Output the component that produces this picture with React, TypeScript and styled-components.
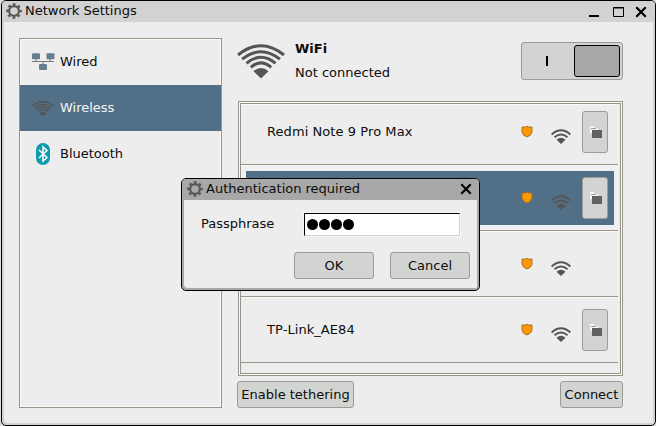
import React from "react";
import styled, { createGlobalStyle } from "styled-components";

const Global = createGlobalStyle`
  * { box-sizing: border-box; }
  body { margin: 0; background: #dcdcdc; font: 13px/16px "DejaVu Sans", sans-serif; color: #0c0c0c; }
  button { font: inherit; color: inherit; padding: 0; }
  svg { display: block; flex: none; }
`;

const Window = styled.div`
  position: relative;
  display: flex;
  flex-direction: column;
  width: 655px;
  height: 426px;
  margin-left: 1px;
  background: #ededed;
  border: 1px solid #000;
  border-radius: 5px;
  box-shadow: inset 2px -2px 0 #d2d2d2, inset -2px 0 0 #d2d2d2;
`;

const TitleBar = styled.header<{ $active?: boolean }>`
  display: flex;
  align-items: center;
  height: 21px;
  flex: none;
  padding: ${(p) => (p.$active ? "0 7px 2px 5px" : "0 8px 2px 4px")};
  background: ${(p) => (p.$active ? "#a8a8a8" : "#d2d2d2")};
  border-radius: 4px 4px 0 0;
`;

const Title = styled.h1`
  flex: 1;
  margin: 0 0 0 3px;
  font-size: 13px;
  font-weight: 400;
  line-height: 16px;
  white-space: nowrap;
`;

const WindowButtons = styled.div`
  display: flex;
  gap: 11px;
  padding-top: 2px;
`;

const Content = styled.main`
  display: flex;
  gap: 15px;
  padding: 16px 31px 0 17px;
`;

const Sidebar = styled.nav`
  width: 203px;
  height: 370px;
  border: 1px solid #97948a;
  box-shadow: inset 0 0 0 1px #fbfaf7;
`;

const NavItem = styled.a<{ $selected?: boolean }>`
  display: flex;
  align-items: center;
  gap: 5px;
  height: 46px;
  padding-left: 11px;
  color: ${(p) => (p.$selected ? "#f4f7fa" : "#0c0c0c")};
  background: ${(p) => (p.$selected ? "#526f88" : "transparent")};
`;

const NavIcon = styled.span`
  display: flex;
  justify-content: center;
  width: 24px;
`;

const Main = styled.section`
  width: 386px;
  display: flex;
  flex-direction: column;
`;

const Status = styled.div`
  display: flex;
  height: 63px;
`;

const StatusIcon = styled.div`
  padding-top: 4px;
`;

const StatusText = styled.div`
  flex: 1;
  padding: 3px 0 0 10px;
  display: flex;
  flex-direction: column;
  gap: 8px;
`;

const Toggle = styled.button`
  display: flex;
  align-items: center;
  width: 102px;
  height: 38px;
  margin-top: 4px;
  padding: 2px;
  border: 1px solid #999c98;
  border-radius: 3px;
  background: #d2d4d1;
`;

const ToggleMark = styled.span`
  width: 2px;
  height: 10px;
  margin: 0 26px 0 22px;
  background: #000;
`;

const Knob = styled.span`
  width: 46px;
  height: 32px;
  border: 1px solid #000;
  border-radius: 3px;
  background: #a8a8a8;
`;

const ListFrame = styled.div`
  height: 275px;
  margin-left: 1px;
  border: 1px solid #97948a;
  padding: 1px;
  background: #fbfaf7;
`;

const NetworkList = styled.div`
  height: 100%;
  border: 1px solid #97948a;
  background: #ededed;
  overflow: hidden;
`;

const Network = styled.div<{ $selected?: boolean }>`
  display: grid;
  grid-template-columns: 1fr 30px 31px 26px;
  align-items: center;
  height: 66px;
  margin-right: 2px;
  padding: 3px 10px 2px 26px;
  border-bottom: 1px solid #97948a;
  box-shadow: inset 0 1px 0 #fbfaf7;
  background: ${(p) =>
    p.$selected
      ? "linear-gradient(#526f88, #526f88) 5px 6px / 368px 54px no-repeat, #edf1f4"
      : "transparent"};

  &:first-child {
    height: 61px;
    padding-top: 1px;
    padding-bottom: 5px;
  }
`;

const NetworkName = styled.span`
  letter-spacing: 0.07px;
`;

const Security = styled.span`
  padding-bottom: 1px;
`;

const Signal = styled.span`
  padding-top: 8px;
`;

const Button = styled.button<{ $w?: number; $h?: number }>`
  display: flex;
  align-items: center;
  justify-content: center;
  width: ${(p) => p.$w ?? 26}px;
  height: ${(p) => p.$h ?? 27}px;
  border: 1px solid #999c98;
  border-radius: 3px;
  background: #d2d4d1;
`;

const Actions = styled.footer`
  display: flex;
  justify-content: space-between;
  padding-top: 5px;
`;

const Dialog = styled.div`
  position: absolute;
  left: 179px;
  top: 177px;
  width: 299px;
  height: 113px;
  display: flex;
  flex-direction: column;
  background: #ededed;
  border: 1px solid #000;
  border-radius: 5px;
  box-shadow: inset 2px -2px 0 #a8a8a8, inset -2px 0 0 #a8a8a8;
`;

const Field = styled.label`
  display: flex;
  align-items: center;
  padding: 13px 19px 0 19px;
`;

const FieldLabel = styled.span`
  width: 103px;
  padding-bottom: 2px;
`;

const Password = styled.span`
  display: flex;
  align-items: center;
  gap: 1px;
  width: 156px;
  height: 23px;
  padding-left: 2px;
  background: #fff;
  border: 1px solid #d0d0ce;
  border-top-color: #000;
  border-left-color: #000;
  box-shadow: 0 0 0 1px #f7f7f5;
`;

const Dot = styled.i`
  width: 11px;
  height: 11px;
  border-radius: 50%;
  background: #000;
`;

const DialogActions = styled.div`
  display: flex;
  justify-content: flex-end;
  gap: 16px;
  padding: 16px 9px 0 0;
`;

const Gear = () => (
  <svg width="16" height="16" viewBox="0 0 16 16" fill="none" stroke="#555">
    <circle cx="8" cy="8" r="4.9" strokeWidth="2.2" />
    <circle cx="8" cy="8" r="6.8" strokeWidth="2" strokeDasharray="2.67 2.67" strokeDashoffset="1.33" />
  </svg>
);

const Close = () => (
  <svg width="12" height="12" viewBox="0 0 12 12" stroke="#000" strokeWidth="2.2">
    <path d="M1.3 1.3 10.7 10.7M10.7 1.3 1.3 10.7" />
  </svg>
);

const Minimize = () => (
  <svg width="12" height="12">
    <path d="M0 9h10v2H0z" />
  </svg>
);

const Maximize = () => (
  <svg width="12" height="12" fill="none" stroke="#000">
    <path d="M1.5 1.5h10v9h-10zM1 2h11" />
  </svg>
);

const Wired = () => (
  <svg width="24" height="18" viewBox="0 0 24 18">
    <path d="M5 6v3M19 6v3M12 9v3M1 8.5h22" stroke="#777" fill="none" />
    <g fill="#647f8c">
      <rect x="1" y="0.3" width="8" height="6" rx="1" />
      <rect x="15.5" y="0.3" width="8" height="6" rx="1" />
      <rect x="8" y="11" width="8" height="6" rx="1" />
    </g>
  </svg>
);

const WifiLarge = ({ width = 48 }: { width?: number }) => (
  <svg width={width} height={(width * 37) / 48} viewBox="0 0 48 37" fill="none" stroke="#555" strokeWidth="3">
    <path d="M1 13Q24-5.5 47 13M5.1 17.200Q24 2.200 42.900 17.200M9.500 21.300Q24 9.300 38.500 21.300M13.800 25.400Q24 16.400 34.200 25.400" />
    <path d="M16.500 29.200Q24 22.600 31.500 29.200L24 36.500Z" fill="#555" stroke="none" />
  </svg>
);

const WifiSmall = () => (
  <svg width="20" height="15" viewBox="0 0 20 15" fill="none" stroke="#555" strokeWidth="1.9">
    <path d="M.6 5.5Q10-2.8 19.4 5.5M3.5 8.3Q10 2.8 16.5 8.3" />
    <path d="M5.500 10.800Q10 6.600 14.500 10.800L10 15Z" fill="#555" stroke="none" />
  </svg>
);

const Bluetooth = () => (
  <svg width="24" height="22" viewBox="0 0 24 22">
    <rect x="5" y="0" width="14" height="22" rx="7" fill="#0d9cad" />
    <path d="M8 7l8 7.5-4 3.5V4l4 3.5L8 15" fill="none" stroke="#fff" strokeWidth="1.5" />
  </svg>
);

const Shield = () => (
  <svg width="12" height="13" viewBox="0 0 12 13">
    <path d="M1 2H4.5L6 1.2L7.5 2H11V7Q10.5 10.5 6 12Q1.5 10.5 1 7Z" fill="#ff9800" stroke="#a36c21" strokeWidth=".9" />
  </svg>
);

const Folder = () => (
  <svg width="14" height="12" viewBox="0 0 14 12">
    <path d="M2 7V0H6L7 2H10V5H4V7Z" fill="#f5f5f3" />
    <path d="M3 2.5H8" stroke="#999" />
    <path d="M4 4h10v8H4z" fill="#616161" />
  </svg>
);

const networks = [
  { name: "Redmi Note 9 Pro Max", saved: true },
  { name: "", saved: true, selected: true },
  { name: "", saved: false },
  { name: "TP-Link_AE84", saved: true },
];

export default function App() {
  return (
    <>
      <Global />
      <Window>
        <TitleBar>
          <Gear />
          <Title>Network Settings</Title>
          <WindowButtons>
            <Minimize />
            <Maximize />
            <Close />
          </WindowButtons>
        </TitleBar>
        <Content>
          <Sidebar>
            <NavItem><NavIcon><Wired /></NavIcon>Wired</NavItem>
            <NavItem $selected><NavIcon><WifiLarge width={22} /></NavIcon>Wireless</NavItem>
            <NavItem><NavIcon><Bluetooth /></NavIcon>Bluetooth</NavItem>
          </Sidebar>
          <Main>
            <Status>
              <StatusIcon><WifiLarge /></StatusIcon>
              <StatusText>
                <b>WiFi</b>
                <span>Not connected</span>
              </StatusText>
              <Toggle><ToggleMark /><Knob /></Toggle>
            </Status>
            <ListFrame>
              <NetworkList>
                {networks.map((n, i) => (
                  <Network key={i} $selected={n.selected}>
                    <NetworkName>{n.name}</NetworkName>
                    <Security><Shield /></Security>
                    <Signal><WifiSmall /></Signal>
                    {n.saved && <Button $h={42}><Folder /></Button>}
                  </Network>
                ))}
              </NetworkList>
            </ListFrame>
            <Actions>
              <Button $w={117}>Enable tethering</Button>
              <Button $w={63}>Connect</Button>
            </Actions>
          </Main>
        </Content>
        <Dialog>
          <TitleBar $active>
            <Gear />
            <Title>Authentication required</Title>
            <Close />
          </TitleBar>
          <Field>
            <FieldLabel>Passphrase</FieldLabel>
            <Password><Dot /><Dot /><Dot /><Dot /></Password>
          </Field>
          <DialogActions>
            <Button $w={80}>OK</Button>
            <Button $w={80}>Cancel</Button>
          </DialogActions>
        </Dialog>
      </Window>
    </>
  );
}
